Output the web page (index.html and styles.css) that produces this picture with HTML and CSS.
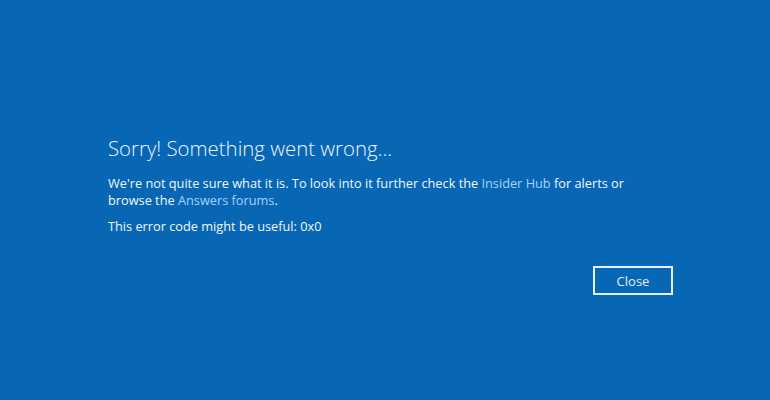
FILE: index.html
```html
<!DOCTYPE html>
<html>
<head>
<meta charset="utf-8">
<link rel="stylesheet" href="styles.css">
</head>
<body>
<div class="dialog">
  <h1 class="title">Sorry! Something went wrong...</h1>
  <p class="msg">We're not quite sure what it is. To look into it further check the <span class="link">Insider Hub</span> for alerts or<br>browse the <span class="link">Answers forums</span>.</p>
  <p class="msg code">This error code might be useful: 0x0</p>
  <div class="actions"><button class="btn">Close</button></div>
</div>
</body>
</html>
```
FILE: styles.css
```css
html, body {
  margin: 0;
  height: 100%;
}
body {
  background: #0867b4;
  font-family: "Open Sans", "Noto Sans", sans-serif;
  color: #ffffff;
}
.dialog {
  padding: 133px 97px 0 108px;
  display: flex;
  flex-direction: column;
}
.title {
  margin: 0;
  font-weight: 300;
  font-size: 20.4px;
  line-height: 30px;
  color: #eef4fb;
}
.msg {
  margin: 12px 0 0 0;
  font-size: 12.75px;
  line-height: 17px;
  color: #f2f6fb;
}
.code {
  margin-top: 9px;
}
.link {
  color: #a9d2f5;
}
.actions {
  display: flex;
  justify-content: flex-end;
  margin-top: 31px;
}
.btn {
  width: 80px;
  height: 29px;
  background: transparent;
  border: 2px solid #e6eef8;
  color: #e6eef8;
  font-family: inherit;
  font-size: 13px;
  padding: 0;
}
```
